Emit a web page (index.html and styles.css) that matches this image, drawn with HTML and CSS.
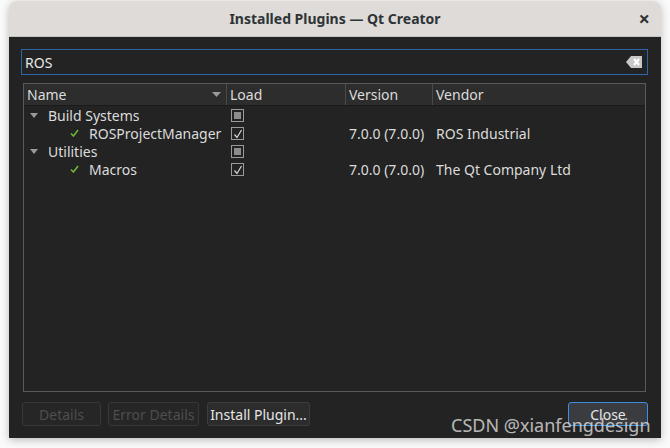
FILE: index.html
```html
<!DOCTYPE html>
<html>
<head>
<meta charset="utf-8">
<link rel="stylesheet" href="styles.css">
</head>
<body>
<div class="window">
  <div class="titlebar">
    <span class="title">Installed Plugins — Qt Creator</span>
    <span class="close-x">×</span>
  </div>
  <div class="content">
    <div class="search">
      <span class="search-text">ROS</span>
      <svg class="clear" width="16" height="12" viewBox="0 0 16 12"><path d="M5 0H16V12H5L0 6Z" fill="#c8c8c8"/><path d="M8 3L13 9M13 3L8 9" stroke="#ffffff" stroke-width="2"/></svg>
    </div>
    <div class="tree">
      <div class="header">
        <div class="hcell c-name">Name<svg class="sort" width="9" height="5" viewBox="0 0 9 5"><path d="M0 0H9L4.5 5Z" fill="#9a9a9a"/></svg></div>
        <div class="hcell c-load">Load</div>
        <div class="hcell c-ver">Version</div>
        <div class="hcell c-vend">Vendor</div>
      </div>
      <div class="row">
        <div class="cell c-name lvl1"><svg class="arrow" width="8" height="5" viewBox="0 0 8 5"><path d="M0 0H8L4 5Z" fill="#9a9a9a"/></svg>Build Systems</div>
        <div class="cell c-load"><span class="cb partial"></span></div>
        <div class="cell c-ver"></div>
        <div class="cell c-vend"></div>
      </div>
      <div class="row">
        <div class="cell c-name lvl2"><svg class="ok" width="9" height="8" viewBox="0 0 9 8"><path d="M1 4.5L3.5 7L8 1" stroke="#6cb43a" stroke-width="1.6" fill="none"/></svg>ROSProjectManager</div>
        <div class="cell c-load"><span class="cb"><svg width="12" height="12" viewBox="0 0 12 12"><path d="M2.5 6.5L5 9.5L9.5 2" stroke="#d8d8d8" stroke-width="1.2" fill="none"/></svg></span></div>
        <div class="cell c-ver">7.0.0 (7.0.0)</div>
        <div class="cell c-vend">ROS Industrial</div>
      </div>
      <div class="row">
        <div class="cell c-name lvl1"><svg class="arrow" width="8" height="5" viewBox="0 0 8 5"><path d="M0 0H8L4 5Z" fill="#9a9a9a"/></svg>Utilities</div>
        <div class="cell c-load"><span class="cb partial"></span></div>
        <div class="cell c-ver"></div>
        <div class="cell c-vend"></div>
      </div>
      <div class="row">
        <div class="cell c-name lvl2"><svg class="ok" width="9" height="8" viewBox="0 0 9 8"><path d="M1 4.5L3.5 7L8 1" stroke="#6cb43a" stroke-width="1.6" fill="none"/></svg>Macros</div>
        <div class="cell c-load"><span class="cb"><svg width="12" height="12" viewBox="0 0 12 12"><path d="M2.5 6.5L5 9.5L9.5 2" stroke="#d8d8d8" stroke-width="1.2" fill="none"/></svg></span></div>
        <div class="cell c-ver">7.0.0 (7.0.0)</div>
        <div class="cell c-vend">The Qt Company Ltd</div>
      </div>
    </div>
    <div class="buttons">
      <button class="btn disabled w-details">Details</button>
      <button class="btn disabled w-err">Error Details</button>
      <button class="btn w-install">Install Plugin...</button>
      <span class="spacer"></span>
      <button class="btn default w-close">Close</button>
    </div>
  </div>
</div>
<div class="watermark">CSDN @xianfengdesign</div>
</body>
</html>
```
FILE: styles.css
```css
html, body { margin: 0; padding: 0; }
body {
  width: 670px; height: 448px; overflow: hidden;
  background: #fafafa;
  font-family: "Noto Sans", "DejaVu Sans", sans-serif;
  position: relative;
}
.window {
  margin: 1px 9px 0 9px;
  width: 652px;
  height: 437px;
  border-radius: 8px 8px 0 0;
  box-shadow: 0 2px 8px rgba(0,0,0,0.25);
  display: flex; flex-direction: column;
  overflow: hidden;
}
.titlebar {
  height: 36px;
  background: #dedbd8;
  border-bottom: 1px solid #c6c2be;
  display: flex; align-items: center; justify-content: center;
  position: relative;
}
.title { font-size: 14px; font-weight: bold; color: #2e3436; }
.close-x {
  position: absolute; right: 11px; top: 8px;
  font-size: 20px; font-weight: bold; color: #2e3436; line-height: 20px;
}
.content {
  flex: 1;
  background: #232323;
  padding: 12px 13px 12px 12px;
  display: flex; flex-direction: column;
  color: #dcdcdc;
  font-size: 13.5px;
}
.search {
  height: 24px;
  border: 1px solid #2f66a8;
  display: flex; align-items: center;
  padding: 0 5px 0 3px;
}
.search-text { flex: 1; font-size: 14px; color: #e8e8e8; }
.clear { display: block; }
.tree {
  margin: 8px 2px 0 2px;
  border: 1px solid #5a5a5a;
  height: 307px;
  background: #232323;
}
.header {
  display: flex; height: 21px;
  background: #2d2d2d;
  border-bottom: 1px solid #1a1a1a;
}
.hcell {
  display: flex; align-items: center; padding-left: 3px;
  border-right: 1px solid #4a4a4a;
  box-sizing: border-box;
  position: relative;
  font-size: 14px;
  color: #dcdcdc;
}
.hcell:last-child { border-right: none; }
.c-name { width: 203px; }
.c-load { width: 119px; }
.c-ver { width: 87px; }
.c-vend { flex: 1; }
.sort { position: absolute; right: 5px; top: 8px; }
.row { display: flex; height: 18px; }
.cell {
  display: flex; align-items: center; padding-left: 3px;
  box-sizing: border-box; white-space: nowrap;
  font-size: 14px;
}
.cell.c-load { padding-left: 4px; }
.lvl1 { padding-left: 6px; }
.lvl1 .arrow { margin-right: 10px; }
.lvl2 { padding-left: 46px; }
.lvl2 .ok { margin-right: 10px; }
.cb {
  width: 11px; height: 11px;
  border: 1px solid #9a9a9a;
  display: inline-flex; align-items: center; justify-content: center;
  position: relative;
}
.cb svg { position: absolute; left: 0; top: 0; }
.cb.partial::after {
  content: ""; width: 7px; height: 7px; background: #8c8c8c;
}
.buttons {
  display: flex; align-items: center; gap: 7px;
  margin-top: 10px;
}
.btn {
  height: 24px;
  font-family: inherit; font-size: 14px;
  background: #2c2c2c;
  border: 1px solid #3c3c3c;
  border-radius: 3px;
  color: #e6e6e6;
  padding: 0;
}
.btn.disabled { color: #4e4e4e; background: #262626; border-color: #383838; }
.btn.default { border-color: #3d8ee0; background: #3a3c40; }
.w-details { width: 79px; margin-left: 1px; }
.w-err { width: 91px; }
.w-install { width: 103px; margin-left: 1px; }
.w-close { width: 80px; }
.spacer { flex: 1; }
.watermark {
  position: absolute; left: 451px; top: 413px;
  font-size: 18px; color: rgba(225,225,225,0.8);
  font-family: "Noto Sans", "DejaVu Sans", sans-serif;
  white-space: nowrap;
}
```
